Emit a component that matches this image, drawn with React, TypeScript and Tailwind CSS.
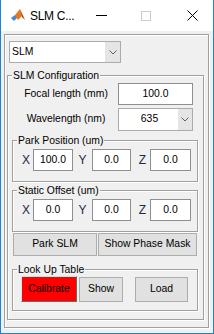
import React from "react";

// Etched group box, like a MATLAB uipanel
function Frame({
  title,
  className,
  children,
}: {
  title?: string;
  className: string;
  children?: React.ReactNode;
}) {
  return (
    <div
      className={`relative border border-[#a0a0a0] shadow-[1px_1px_0_#fff,inset_1px_1px_0_#fff] ${className}`}
    >
      {title && (
        <span className="absolute left-[4px] top-[-7px] bg-[#f0f0f0] px-[1px] leading-[13px] text-black">
          {title}
        </span>
      )}
      {children}
    </div>
  );
}

function Chevron() {
  return (
    <svg width="8" height="5" viewBox="0 0 8 5">
      <polyline points="0.5,0.5 4,4 7.5,0.5" fill="none" stroke="#606060" strokeWidth="1" />
    </svg>
  );
}

function Edit({ value, className }: { value: string; className: string }) {
  return (
    <div
      className={`flex items-center justify-center border border-[#8f8f8f] bg-white text-black ${className}`}
    >
      {value}
    </div>
  );
}

function Btn({ label, className }: { label: string; className: string }) {
  return (
    <div
      className={`flex items-center justify-center border border-[#adadad] bg-[#e1e1e1] text-black ${className}`}
    >
      {label}
    </div>
  );
}

export default function App() {
  return (
    <div className="flex h-[334px] w-[214px] flex-col border-x border-b border-[#1883d7] bg-white font-['Liberation_Sans',Arial,sans-serif] text-[10.4px] leading-none">
      {/* title bar */}
      <div className="flex h-[31px] items-center">
        <svg className="ml-[9px]" width="16" height="16" viewBox="0 0 16 16">
          <polygon points="1,10 5,7 8,9 4,13" fill="#4b87c6" />
          <polygon points="5,7 10,1 12,8 8,12" fill="#e8791c" />
          <polygon points="10,1 15,12 12,9" fill="#b03818" />
        </svg>
        <span className="ml-[4px] text-[12px] tracking-[-0.3px] text-black">SLM C...</span>
        <div className="ml-[22px] h-px w-[11px] bg-black" />
        <div className="ml-[34px] h-[10px] w-[10px] border border-[#cccccc]" />
        <svg className="ml-[36px]" width="11" height="11" viewBox="0 0 11 11">
          <line x1="0.5" y1="0.5" x2="10.5" y2="10.5" stroke="#000" strokeWidth="1" />
          <line x1="10.5" y1="0.5" x2="0.5" y2="10.5" stroke="#000" strokeWidth="1" />
        </svg>
      </div>

      {/* content */}
      <div className="flex-1 bg-[#f0f0f0] pl-[3px] pt-[3px]">
        <Frame className="h-[294px] w-[205px]">
          {/* top popup */}
          <div className="ml-[4px] mt-[6px] flex h-[22px] w-[112px] border border-[#acacac] bg-white">
            <div className="flex flex-1 items-center pl-[2px] text-black">SLM</div>
            <div className="flex w-[15px] items-center justify-center bg-[#e5e5e5]">
              <Chevron />
            </div>
          </div>

          <Frame title="SLM Configuration" className="ml-[2px] mt-[12px] h-[245px] w-[197px]">
            <div className="mt-[7px] flex items-center">
              <div className="ml-[8px] w-[100px] text-center text-black">Focal length (mm)</div>
              <Edit value="100.0" className="ml-[2px] h-[22px] w-[75px]" />
            </div>
            <div className="mt-[3px] flex items-center">
              <div className="ml-[8px] w-[100px] text-center text-black">Wavelength (nm)</div>
              <div className="ml-[2px] flex h-[23px] w-[75px] border border-[#acacac] bg-white">
                <div className="flex flex-1 items-center justify-center pl-[2px] text-black">635</div>
                <div className="flex w-[14px] items-center justify-center bg-[#e5e5e5]">
                  <Chevron />
                </div>
              </div>
            </div>

            <Frame title="Park Position (um)" className="ml-[4px] mt-[9px] h-[42px] w-[186px]">
              <div className="mt-[8px] flex items-center">
                <div className="ml-[8px] w-[10px] text-center text-[12px] text-[#1c2a44]">X</div>
                <Edit value="100.0" className="ml-[2px] h-[22px] w-[40px]" />
                <div className="w-[19px] text-center text-[12px] text-[#1c2a44]">Y</div>
                <Edit value="0.0" className="h-[22px] w-[39px]" />
                <div className="w-[19px] pl-[4px] text-center text-[12px] text-[#1c2a44]">Z</div>
                <Edit value="0.0" className="h-[22px] w-[41px]" />
              </div>
            </Frame>

            <Frame title="Static Offset (um)" className="ml-[4px] mt-[8px] h-[42px] w-[186px]">
              <div className="mt-[8px] flex items-center">
                <div className="ml-[8px] w-[10px] text-center text-[12px] text-[#1c2a44]">X</div>
                <Edit value="0.0" className="ml-[2px] h-[22px] w-[40px]" />
                <div className="w-[19px] text-center text-[12px] text-[#1c2a44]">Y</div>
                <Edit value="0.0" className="h-[22px] w-[39px]" />
                <div className="w-[19px] pl-[4px] text-center text-[12px] text-[#1c2a44]">Z</div>
                <Edit value="0.0" className="h-[22px] w-[41px]" />
              </div>
            </Frame>

            <div className="mt-[1px] flex">
              <Btn label="Park SLM" className="ml-[5px] h-[23px] w-[84px]" />
              <Btn label="Show Phase Mask" className="ml-[1px] h-[23px] w-[99px]" />
            </div>

            <Frame title="Look Up Table" className="ml-[4px] mt-[13px] h-[42px] w-[186px]">
              <div className="mt-[6px] flex items-start">
                <div className="ml-[8px] flex h-[26px] w-[56px] items-center justify-center border border-b-[#696969] border-l-[#e3e3e3] border-r-[#696969] border-t-[#e3e3e3] bg-[#ff0000] text-black">
                  Calibrate
                </div>
                <Btn label="Show" className="ml-[2px] mt-[1px] h-[25px] w-[44px]" />
                <Btn label="Load" className="ml-[12px] mt-[1px] h-[25px] w-[53px]" />
              </div>
            </Frame>
          </Frame>
        </Frame>
      </div>
    </div>
  );
}
